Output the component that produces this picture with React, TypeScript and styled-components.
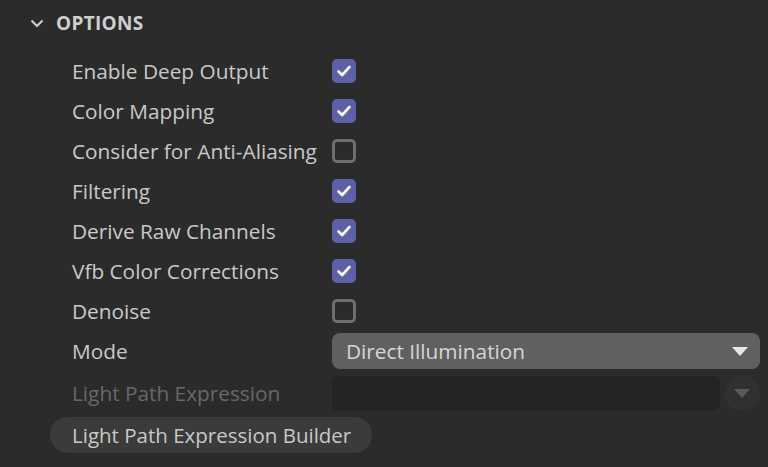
import React from "react";
import styled, { createGlobalStyle } from "styled-components";

const Global = createGlobalStyle`
  html, body {
    margin: 0;
    padding: 0;
    background: #2b2b2b;
  }
  body {
    font-family: "Open Sans", "Noto Sans", sans-serif;
    color: #c9c9c9;
  }
`;

const Panel = styled.div`
  width: 768px;
  height: 467px;
  background: #2b2b2b;
  overflow: hidden;
`;

const Header = styled.div`
  height: 46px;
  display: flex;
  align-items: center;
  gap: 12px;
  padding-left: 30px;
  box-sizing: border-box;
`;

const Title = styled.span`
  font-size: 19px;
  font-weight: 700;
  color: #cfcfcf;
  letter-spacing: 0.3px;
`;

const Rows = styled.div`
  display: flex;
  flex-direction: column;
  padding: 5px 8px 0 72px;
`;

const Row = styled.div<{ $h?: number }>`
  height: ${(p) => p.$h ?? 40}px;
  display: grid;
  grid-template-columns: 260px 1fr;
  align-items: center;
`;

const Label = styled.span<{ $disabled?: boolean }>`
  font-size: 20.8px;
  color: ${(p) => (p.$disabled ? "#686868" : "#c9c9c9")};
  white-space: nowrap;
  margin-top: -1px;
`;

const Box = styled.span<{ $on: boolean }>`
  width: 24px;
  height: 24px;
  border-radius: 5px;
  box-sizing: border-box;
  display: flex;
  align-items: center;
  justify-content: center;
  background: ${(p) => (p.$on ? "#5d5fa8" : "transparent")};
  border: ${(p) => (p.$on ? "none" : "3px solid #6e6e6e")};
`;

const Select = styled.div`
  height: 36px;
  border-radius: 8px;
  background: #606060;
  display: flex;
  align-items: center;
  justify-content: space-between;
  padding: 0 12px 0 14px;
  font-size: 20.8px;
  color: #d6d6d6;
`;

const ExprLine = styled.div`
  display: flex;
  align-items: center;
  gap: 4px;
`;

const Input = styled.div`
  flex: 1;
  height: 35px;
  border-radius: 6px;
  background: #242424;
`;

const RoundBtn = styled.div`
  width: 36px;
  height: 36px;
  border-radius: 50%;
  background: #303030;
  display: flex;
  align-items: center;
  justify-content: center;
`;

const Builder = styled.button`
  margin: 2px 0 0 50px;
  height: 36px;
  padding: 0 21px 0 22px;
  border: none;
  border-radius: 18px;
  background: #3b3b3b;
  color: #c9c9c9;
  font-family: inherit;
  font-size: 20.5px;
`;

const Chevron = () => (
  <svg width="14" height="9" viewBox="0 0 14 9">
    <path d="M1.5 1.5 L7 7 L12.5 1.5" fill="none" stroke="#cfcfcf" strokeWidth="2" />
  </svg>
);

const Check = () => (
  <svg width="16" height="14" viewBox="0 0 16 14">
    <path d="M2.5 7.5 L6.2 11 L13.5 3" fill="none" stroke="#ffffff" strokeWidth="2.6" strokeLinecap="round" strokeLinejoin="round" />
  </svg>
);

const Tri = ({ color }: { color: string }) => (
  <svg width="16" height="9" viewBox="0 0 16 9">
    <path d="M0 0 H16 L8 9 Z" fill={color} />
  </svg>
);

const checks: [string, boolean][] = [
  ["Enable Deep Output", true],
  ["Color Mapping", true],
  ["Consider for Anti-Aliasing", false],
  ["Filtering", true],
  ["Derive Raw Channels", true],
  ["Vfb Color Corrections", true],
  ["Denoise", false],
];

export default function App() {
  return (
    <Panel>
      <Global />
      <Header>
        <Chevron />
        <Title>OPTIONS</Title>
      </Header>
      <Rows>
        {checks.map(([label, on]) => (
          <Row key={label}>
            <Label>{label}</Label>
            <Box $on={on}>{on && <Check />}</Box>
          </Row>
        ))}
        <Row>
          <Label>Mode</Label>
          <Select>
            <span>Direct Illumination</span>
            <Tri color="#e8e8e8" />
          </Select>
        </Row>
        <Row $h={44}>
          <Label $disabled>Light Path Expression</Label>
          <ExprLine>
            <Input />
            <RoundBtn>
              <Tri color="#595959" />
            </RoundBtn>
          </ExprLine>
        </Row>
      </Rows>
      <Builder>Light Path Expression Builder</Builder>
    </Panel>
  );
}
